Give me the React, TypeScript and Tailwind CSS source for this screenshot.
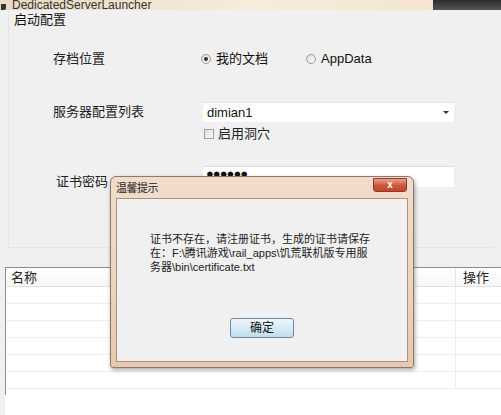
import { useState } from 'react';

const FONT = "font-['Liberation_Sans','Noto_Sans_CJK_SC',sans-serif]";

/* ─── Windows-ish radio ─── */
function Radio({ checked, label }: { checked: boolean; label: string }) {
  return (
    <div className="flex items-center gap-[5px]">
      <span className="w-[10px] h-[10px] rounded-full border border-[#9a9a9a] bg-gradient-to-br from-[#dcdcdc] to-[#fafafa] flex items-center justify-center">
        {checked && <span className="w-[4px] h-[4px] rounded-full bg-[#333]" />}
      </span>
      <span className="text-[13px] text-[#111]">{label}</span>
    </div>
  );
}

/* ─── Dialog overlay ─── */
function AlertDialog() {
  return (
    <div className="absolute left-[110px] top-[176px] w-[304px] h-[192px] rounded-t-[6px] rounded-b-[3px] border border-[#8a7868] bg-gradient-to-b from-[#f1dccb] via-[#eed6c0] to-[#e6c8ad] shadow-[1px_2px_4px_rgba(0,0,0,0.35)] flex flex-col">
      {/* title bar */}
      <div className="h-[21px] flex items-center justify-between pl-[5px] pr-[6px]">
        <span className="text-[11px] mt-[2px] text-[#222] tracking-[-0.5px]">温馨提示</span>
        <button className="w-[34px] h-[14px] -mt-[5px] rounded-b-[3px] border border-[#8d3a2c] bg-gradient-to-b from-[#e6a08c] via-[#cf5a40] to-[#c4452d] flex items-center justify-center text-white text-[10px] font-bold leading-none">
          x
        </button>
      </div>
      {/* content */}
      <div className="flex-1 mx-[5px] mb-[5px] border border-[#a89480] bg-[#f0f0f0] flex flex-col items-center">
        <div className="w-full pl-[33px] pt-[33px] text-[11px] leading-[14px] text-[#222] whitespace-nowrap">
          证书不存在，请注册证书，生成的证书请保存
          <br />
          在：F:\腾讯游戏\rail_apps\饥荒联机版专用服
          <br />
          务器\bin\certificate.txt
        </div>
        <button className="mt-[44px] w-[64px] h-[20px] rounded-[3px] border border-[#6f8aa0] bg-gradient-to-b from-[#eef6fb] via-[#d8ebf7] to-[#bedcee] text-[12px] text-[#111]">
          确定
        </button>
      </div>
    </div>
  );
}

export default function App() {
  const [cave, setCave] = useState(false);
  const rows = [0, 1, 2, 3, 4, 5];

  return (
    <div className={`relative w-[501px] h-[415px] overflow-hidden bg-[#f0f0f0] ${FONT}`}>
      {/* cropped window title strip */}
      <div className="h-[10px] flex overflow-hidden bg-gradient-to-r from-[#e9d8c2] via-[#f6ecdd] to-[#f3e3c9]">
        <div className="flex items-end gap-[6px] pl-[1px] flex-1">
          <span className="w-[5px] h-[6px] bg-[#333] rounded-br-[2px]" />
          <span className="text-[12px] leading-[12px] -mb-[1px] text-[#333]">DedicatedServerLauncher</span>
        </div>
        <div className="w-[68px] bg-gradient-to-b from-[#2c2c2c] to-[#555]" />
      </div>

      {/* group box */}
      <div className="h-[238px] mx-[8px] border-l border-b border-[#e4e4e4] relative">
        <div className="pl-[5px] pt-[2px] text-[13px] leading-[16px] text-[#111]">启动配置</div>

        {/* 存档位置 */}
        <div className="flex items-center mt-[23px] h-[16px]">
          <span className="w-[150px] pl-[44px] text-[13px] text-[#222]">存档位置</span>
          <div className="flex items-center gap-[38px] pl-[42px]">
            <Radio checked label="我的文档" />
            <Radio checked={false} label="AppData" />
          </div>
        </div>

        {/* 服务器配置列表 */}
        <div className="flex items-center mt-[35px] h-[20px]">
          <span className="w-[194px] pl-[44px] text-[13px] text-[#222]">服务器配置列表</span>
          <div className="w-[251px] h-[20px] bg-white border-t border-[#e4e4e4] flex items-center justify-between pl-[4px] pr-[5px]">
            <span className="text-[13px] text-[#111]">dimian1</span>
            <span className="w-0 h-0 border-l-[3px] border-r-[3px] border-t-[3px] border-l-transparent border-r-transparent border-t-[#333]" />
          </div>
        </div>
        <label className="flex items-center gap-[4px] ml-[195px] mt-[4px] h-[16px] cursor-pointer" onClick={() => setCave(!cave)}>
          <span className="w-[10px] h-[10px] border border-[#a0a0a0] bg-gradient-to-br from-[#e0e0e0] to-[#fafafa]" />
          <span className="text-[13px] text-[#222]">启用洞穴</span>
        </label>

        {/* 证书密码 */}
        <div className="flex items-start mt-[24px] h-[21px]">
          <span className="w-[194px] pl-[47px] pt-[6px] text-[13px] text-[#222]">证书密码</span>
          <div className="w-[251px] h-[21px] bg-white border-t border-[#dcdcdc] flex items-start pl-[3px] pt-[1px]">
            <span className="text-[13px] leading-[12px] tracking-[-1px] text-[#111]">●●●●●●</span>
          </div>
        </div>
      </div>

      {/* table */}
      <div className="mt-[19px] ml-[5px] h-[128px] bg-white border-l border-t border-[#8c8c8c]">
        <div className="h-[19px] flex border-b border-[#e2e2e2] bg-gradient-to-b from-white to-[#f7f7f7]">
          <span className="flex-1 pl-[5px] text-[13px] leading-[19px] text-[#222]">名称</span>
          <span className="w-[46px] pl-[7px] border-l border-[#e6e6e6] text-[13px] leading-[19px] text-[#222]">操作</span>
        </div>
        {rows.map((r) => (
          <div key={r} className="h-[17px] flex border-b border-[#eeeeee]">
            <span className="flex-1" />
            <span className="w-[46px] border-l border-[#efefef]" />
          </div>
        ))}
      </div>
      <div className="ml-[5px] bg-white h-[30px]" />

      <AlertDialog />
    </div>
  );
}
